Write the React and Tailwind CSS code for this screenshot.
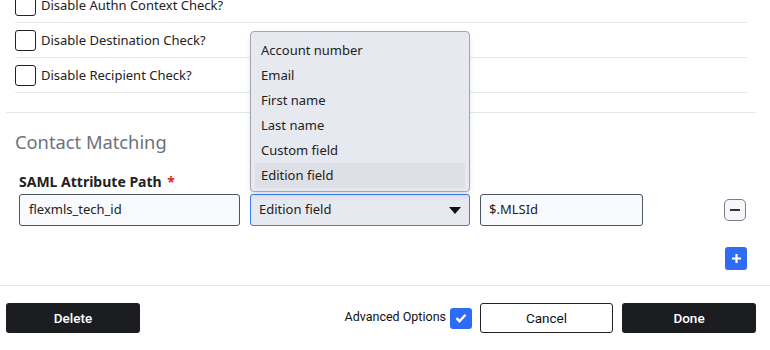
import React, { useState } from 'react';

const options = ['Account number', 'Email', 'First name', 'Last name', 'Custom field', 'Edition field'];

const CheckRow = ({ label }) => (
  <div className="flex items-center gap-[5px] pt-[7px] pb-[6px] border-b border-[#e5e7eb]">
    <span className="w-[21px] h-[21px] rounded-[3px] border border-[#222] bg-white" />
    <span className="text-[13px] text-[#222]">{label}</span>
  </div>
);

const App = () => {
  const [advanced, setAdvanced] = useState(true);
  const [value] = useState('Edition field');

  return (
    <div className="w-[770px] h-[350px] overflow-hidden bg-white font-['Noto_Sans',sans-serif]">
      {/* Checks */}
      <div className="px-[6px]">
        <div className="-mt-[12px] pl-[9px] w-[741px]">
          <CheckRow label="Disable Authn Context Check?" />
          <CheckRow label="Disable Destination Check?" />
          <CheckRow label="Disable Recipient Check?" />
        </div>

        {/* Contact Matching */}
        <div className="mt-[19px] border-t border-[#e3e8ef] w-[750px]">
          <h2 className="mt-[17px] pl-[9px] text-[18.3px] leading-[24px] text-[#6b7280]">Contact Matching</h2>
          <div className="mt-[19px] pl-[13px] text-[14px] leading-[18px] font-bold text-[#222]">
            SAML Attribute Path <span className="text-[#dc2626] ml-[2px]">*</span>
          </div>
          <div className="mt-[3px] pl-[13px] flex items-center">
            <div className="w-[221px] h-[32px] flex items-center px-[9px] rounded-[3px] border border-[#4b5563] bg-[#f8fafd] text-[13px] text-[#222]">
              flexmls_tech_id
            </div>
            <div className="relative ml-[10px] w-[220px]">
              <div className="absolute left-0 bottom-full mb-[2px] w-full rounded-[4px] border border-[#a3a7ad] bg-[#e6eaf0] shadow-md pt-[6px] pb-[3px] px-[4px] z-10">
                {options.map((o) => (
                  <div
                    key={o}
                    className={`h-[25px] flex items-center px-[6px] rounded-[2px] text-[13px] text-[#222] ${
                      o === value ? 'bg-[#dfe0e5]' : ''
                    }`}
                  >
                    {o}
                  </div>
                ))}
              </div>
              <div className="h-[32px] flex items-center justify-between pl-[8px] pr-[8px] rounded-[3px] border border-[#3b7cf0] bg-[#e6eaf0] text-[13px] text-[#222]">
                <span>{value}</span>
                <svg width="12" height="7" viewBox="0 0 12 7"><path d="M0 0h12L6 7z" fill="#111" /></svg>
              </div>
            </div>
            <div className="ml-[10px] w-[163px] h-[32px] flex items-center px-[8px] rounded-[3px] border border-[#4b5563] bg-[#f8fafd] text-[13px] text-[#222]">
              $.MLSId
            </div>
            <button className="ml-[81px] w-[22px] h-[22px] flex items-center justify-center rounded-[5px] border border-[#7a7d83] bg-[#f5f7fa]">
              <span className="w-[10px] h-[2px] bg-[#333]" />
            </button>
          </div>
          <div className="mt-[21px] flex justify-end pr-[9px]">
            <button className="w-[22px] h-[23px] flex items-center justify-center rounded-[3px] bg-[#2f6cf6]">
              <svg width="11" height="11" viewBox="0 0 11 11"><path d="M5.5 1v9M1 5.5h9" stroke="#fff" strokeWidth="2.2" /></svg>
            </button>
          </div>
        </div>
      </div>

      {/* Footer */}
      <div className="mt-[15px] border-t border-[#e5e7eb] pl-[6px] pr-[14px] pt-[17px] flex items-center font-['Roboto',sans-serif]">
        <button className="w-[134px] h-[30px] rounded-[3px] bg-[#1c1d21] text-white text-[13.5px] font-medium">Delete</button>
        <div className="ml-auto flex items-center">
          <span className="text-[12.5px] text-[#111] -mt-[1px]">Advanced Options</span>
          <button
            onClick={() => setAdvanced(!advanced)}
            className="ml-[4px] w-[22px] h-[21px] rounded-[3px] bg-[#2f6cf6] flex items-center justify-center"
          >
            {advanced && (
              <svg width="12" height="10" viewBox="0 0 12 10"><path d="M1.5 5.2l3 3L10.5 1.8" fill="none" stroke="#fff" strokeWidth="2.4" /></svg>
            )}
          </button>
          <button className="ml-[8px] w-[133px] h-[30px] rounded-[3px] border border-[#222] bg-white text-[13.5px] text-[#111]">Cancel</button>
          <button className="ml-[9px] w-[134px] h-[30px] rounded-[3px] bg-[#1c1d21] text-white text-[13.5px] font-medium">Done</button>
        </div>
      </div>
    </div>
  );
};

export default App;
